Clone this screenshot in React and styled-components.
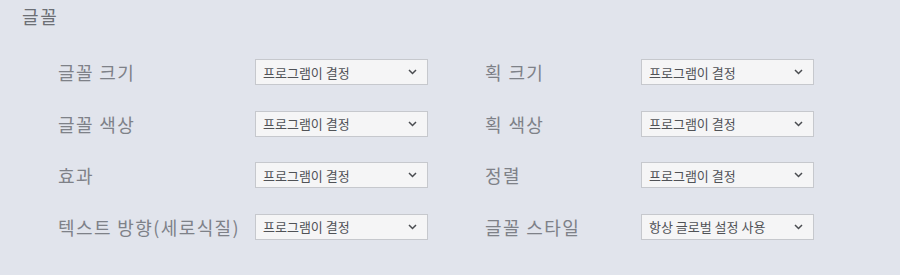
import React from 'react';
import styled, { createGlobalStyle } from 'styled-components';

const GlobalStyle = createGlobalStyle`
	html, body {
		margin: 0;
		padding: 0;
		background: #e1e4ec;
	}
	body {
		font-family: "Noto Sans CJK KR", "Noto Sans", sans-serif;
	}
`;

const Panel = styled.div`
	width: 900px;
	height: 275px;
	box-sizing: border-box;
	padding: 4px 0 0 22px;
	background: #e1e4ec;
`;

const Title = styled.h2`
	margin: 0;
	font-size: 18px;
	font-weight: 400;
	letter-spacing: 1.6px;
	line-height: 24px;
	color: #6c6f75;
`;

const Grid = styled.div`
	display: grid;
	grid-template-columns: 197px 230px 156px 173px;
	grid-auto-rows: 26px;
	row-gap: 25.5px;
	margin: 31px 0 0 36px;
	align-items: center;
`;

const Label = styled.div`
	font-size: 18px;
	letter-spacing: 1.4px;
	color: #7e8188;
	white-space: nowrap;
	line-height: 26px;
`;

const SelectBox = styled.div`
	width: 173px;
	height: 26px;
	box-sizing: border-box;
	display: flex;
	align-items: center;
	justify-content: space-between;
	padding: 0 10px 0 7px;
	background: #f5f5f6;
	border: 1px solid #c6c8cd;
	font-size: 13px;
	color: #505256;
	white-space: nowrap;
`;

const Chevron = () => (
	<svg width="9" height="6" viewBox="0 0 9 6">
		<path d="M1 1 L4.5 4.5 L8 1" fill="none" stroke="#4a4c50" strokeWidth="1.5" />
	</svg>
);

const rows = [
	['글꼴 크기', '프로그램이 결정', '획 크기', '프로그램이 결정'],
	['글꼴 색상', '프로그램이 결정', '획 색상', '프로그램이 결정'],
	['효과', '프로그램이 결정', '정렬', '프로그램이 결정'],
	['텍스트 방향(세로식질)', '프로그램이 결정', '글꼴 스타일', '항상 글로벌 설정 사용'],
];

const Select = ({ value }) => (
	<SelectBox>
		<span>{value}</span>
		<Chevron />
	</SelectBox>
);

const App = () => {
	return (
		<>
			<GlobalStyle />
			<Panel>
				<Title>글꼴</Title>
				<Grid>
					{rows.map((r) => (
						<React.Fragment key={r[0]}>
							<Label>{r[0]}</Label>
							<Select value={r[1]} />
							<Label>{r[2]}</Label>
							<Select value={r[3]} />
						</React.Fragment>
					))}
				</Grid>
			</Panel>
		</>
	);
};

export default App;
